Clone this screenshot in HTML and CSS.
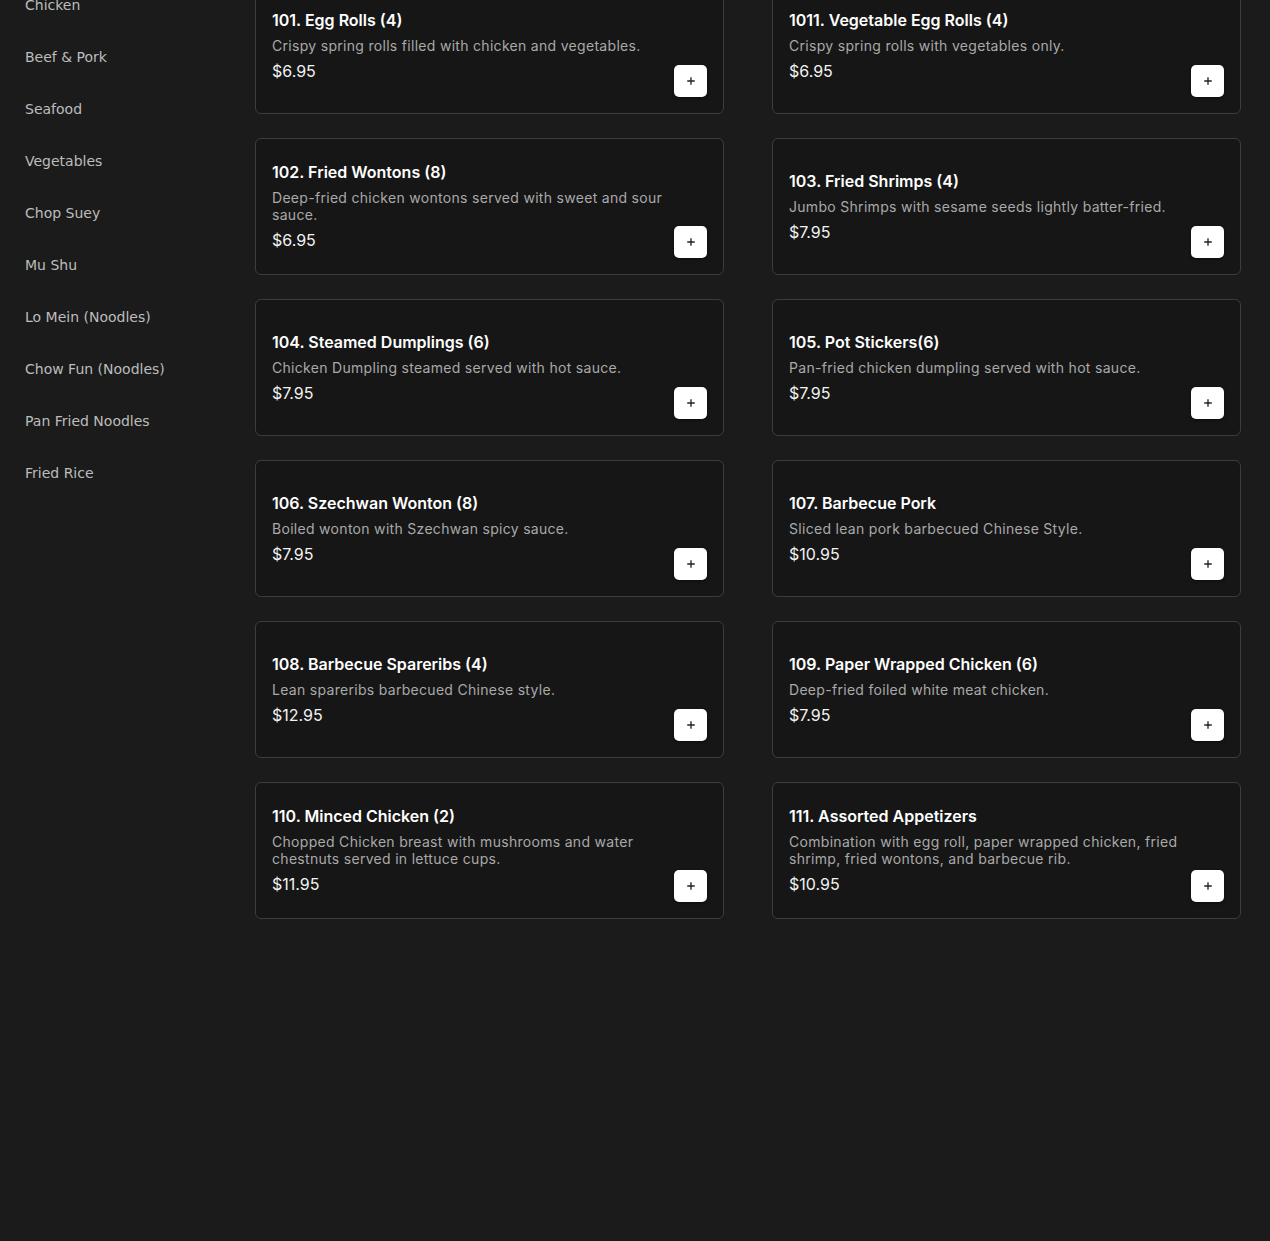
FILE: index.html
```html
<!DOCTYPE html>
<html>
<head>
  <title>Menu</title>
  <link rel="stylesheet" href="styles.css">
</head>
<body>
  <div class="page">
    <ul class="categories">
      <li>Chicken</li>
      <li>Beef &amp; Pork</li>
      <li>Seafood</li>
      <li>Vegetables</li>
      <li>Chop Suey</li>
      <li>Mu Shu</li>
      <li>Lo Mein (Noodles)</li>
      <li>Chow Fun (Noodles)</li>
      <li>Pan Fried Noodles</li>
      <li>Fried Rice</li>
    </ul>

    <div class="menu-grid">
      <div class="card">
        <div class="info">
          <h3>101. Egg Rolls (4)</h3>
          <p class="desc">Crispy spring rolls filled with chicken and vegetables.</p>
          <p class="price">$6.95</p>
        </div>
        <button class="add-btn"><svg viewBox="0 0 12 12"><path d="M6 1.5v9M1.5 6h9"/></svg></button>
      </div>
      <div class="card">
        <div class="info">
          <h3>1011. Vegetable Egg Rolls (4)</h3>
          <p class="desc">Crispy spring rolls with vegetables only.</p>
          <p class="price">$6.95</p>
        </div>
        <button class="add-btn"><svg viewBox="0 0 12 12"><path d="M6 1.5v9M1.5 6h9"/></svg></button>
      </div>
      <div class="card">
        <div class="info">
          <h3>102. Fried Wontons (8)</h3>
          <p class="desc">Deep-fried chicken wontons served with sweet and sour sauce.</p>
          <p class="price">$6.95</p>
        </div>
        <button class="add-btn"><svg viewBox="0 0 12 12"><path d="M6 1.5v9M1.5 6h9"/></svg></button>
      </div>
      <div class="card">
        <div class="info">
          <h3>103. Fried Shrimps (4)</h3>
          <p class="desc">Jumbo Shrimps with sesame seeds lightly batter-fried.</p>
          <p class="price">$7.95</p>
        </div>
        <button class="add-btn"><svg viewBox="0 0 12 12"><path d="M6 1.5v9M1.5 6h9"/></svg></button>
      </div>
      <div class="card">
        <div class="info">
          <h3>104. Steamed Dumplings (6)</h3>
          <p class="desc">Chicken Dumpling steamed served with hot sauce.</p>
          <p class="price">$7.95</p>
        </div>
        <button class="add-btn"><svg viewBox="0 0 12 12"><path d="M6 1.5v9M1.5 6h9"/></svg></button>
      </div>
      <div class="card">
        <div class="info">
          <h3>105. Pot Stickers(6)</h3>
          <p class="desc">Pan-fried chicken dumpling served with hot sauce.</p>
          <p class="price">$7.95</p>
        </div>
        <button class="add-btn"><svg viewBox="0 0 12 12"><path d="M6 1.5v9M1.5 6h9"/></svg></button>
      </div>
      <div class="card">
        <div class="info">
          <h3>106. Szechwan Wonton (8)</h3>
          <p class="desc">Boiled wonton with Szechwan spicy sauce.</p>
          <p class="price">$7.95</p>
        </div>
        <button class="add-btn"><svg viewBox="0 0 12 12"><path d="M6 1.5v9M1.5 6h9"/></svg></button>
      </div>
      <div class="card">
        <div class="info">
          <h3>107. Barbecue Pork</h3>
          <p class="desc">Sliced lean pork barbecued Chinese Style.</p>
          <p class="price">$10.95</p>
        </div>
        <button class="add-btn"><svg viewBox="0 0 12 12"><path d="M6 1.5v9M1.5 6h9"/></svg></button>
      </div>
      <div class="card">
        <div class="info">
          <h3>108. Barbecue Spareribs (4)</h3>
          <p class="desc">Lean spareribs barbecued Chinese style.</p>
          <p class="price">$12.95</p>
        </div>
        <button class="add-btn"><svg viewBox="0 0 12 12"><path d="M6 1.5v9M1.5 6h9"/></svg></button>
      </div>
      <div class="card">
        <div class="info">
          <h3>109. Paper Wrapped Chicken (6)</h3>
          <p class="desc">Deep-fried foiled white meat chicken.</p>
          <p class="price">$7.95</p>
        </div>
        <button class="add-btn"><svg viewBox="0 0 12 12"><path d="M6 1.5v9M1.5 6h9"/></svg></button>
      </div>
      <div class="card">
        <div class="info">
          <h3>110. Minced Chicken (2)</h3>
          <p class="desc">Chopped Chicken breast with mushrooms and water chestnuts served in lettuce cups.</p>
          <p class="price">$11.95</p>
        </div>
        <button class="add-btn"><svg viewBox="0 0 12 12"><path d="M6 1.5v9M1.5 6h9"/></svg></button>
      </div>
      <div class="card">
        <div class="info">
          <h3>111. Assorted Appetizers</h3>
          <p class="desc">Combination with egg roll, paper wrapped chicken, fried shrimp, fried wontons, and barbecue rib.</p>
          <p class="price">$10.95</p>
        </div>
        <button class="add-btn"><svg viewBox="0 0 12 12"><path d="M6 1.5v9M1.5 6h9"/></svg></button>
      </div>
    </div>
  </div>
</body>
</html>
```

FILE: styles.css
```css
html {
  background-color: #1b1b1b;
}

body {
  margin: 0;
  padding: 0;
  background-color: #1b1b1b;
  font-family: "DejaVu Sans", sans-serif;
}

/* page is scrolled a little, top rows sit above the fold */
.page {
  display: flex;
  margin-top: -23px;
  padding-right: 29px;
}

.categories {
  list-style-type: none;
  margin: 0;
  padding: 2px 0 0 25px;
  width: 230px;
  flex-shrink: 0;
}

.categories li {
  font-size: 14px;
  line-height: 20px;
  padding: 16px 0;
  color: #bdbdbd;
}

.menu-grid {
  flex: 1;
  display: grid;
  grid-template-columns: 1fr 1fr;
  column-gap: 48px;
  row-gap: 24px;
}

/* info and button share one cell, button sits in the bottom right corner */
.card {
  display: grid;
  grid-template-columns: 1fr;
  grid-template-rows: 1fr;
  height: 137px;
  box-sizing: border-box;
  padding: 16px;
  background-color: #161616;
  border: 1px solid #3d3d3d;
  border-radius: 6px;
  font-family: Inter, "Open Sans", sans-serif;
}

.info {
  grid-area: 1 / 1;
  display: flex;
  flex-direction: column;
  justify-content: center;
  padding-right: 20px;
}

.info h3 {
  margin: 0 0 6px;
  font-size: 16px;
  line-height: 22px;
  font-weight: 600;
  color: #ffffff;
}

.desc {
  margin: 0 0 6px;
  font-size: 14px;
  line-height: 17px;
  letter-spacing: 0.3px;
  color: #a9a9a9;
}

.price {
  margin: 0;
  padding-bottom: 1px;
  font-size: 16px;
  line-height: 22px;
  color: #f2f2f2;
}

.add-btn {
  grid-area: 1 / 1;
  justify-self: end;
  align-self: end;
  width: 33px;
  height: 32px;
  padding: 0;
  border: none;
  border-radius: 5px;
  background-color: #ffffff;
  box-shadow: 0 1px 3px rgba(0, 0, 0, 0.5);
  display: flex;
  align-items: center;
  justify-content: center;
  cursor: pointer;
}

.add-btn svg {
  width: 10px;
  height: 10px;
  fill: none;
  stroke: #222;
  stroke-width: 1.6;
}
```
